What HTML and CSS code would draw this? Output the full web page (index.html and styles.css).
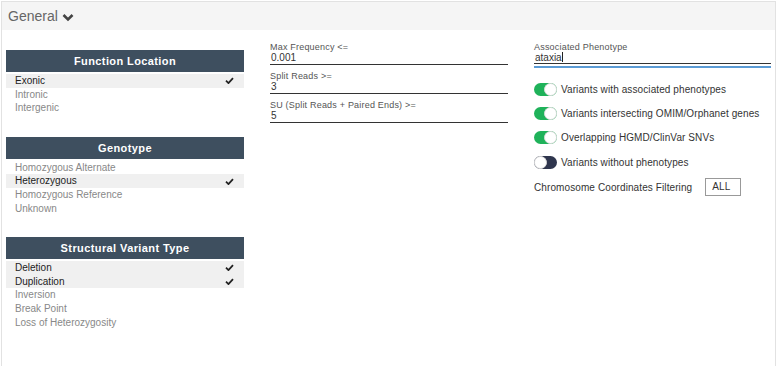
FILE: index.html
```html
<!DOCTYPE html>
<html lang="en">
<head>
    <meta charset="UTF-8">
    <title>Filters</title>
    <link rel="stylesheet" href="styles.css">
</head>
<body>
    <div class="card">
        <div class="card-header">
            General
            <svg class="chevron" width="12" height="9" viewBox="0 0 12 9"><path d="M1.5 2 L6 6.5 L10.5 2" fill="none" stroke="#444" stroke-width="2.6"/></svg>
        </div>
        <div class="card-body">
            <div class="col">
                <div class="panel">
                    <div class="panel-title">Function Location</div>
                    <div class="item selected">Exonic<svg class="check" viewBox="0 0 10 8"><path d="M1 4.2 L3.8 7 L9 1.2" fill="none" stroke="#222" stroke-width="2"/></svg></div>
                    <div class="item">Intronic</div>
                    <div class="item">Intergenic</div>
                </div>
                <div class="panel">
                    <div class="panel-title">Genotype</div>
                    <div class="item">Homozygous Alternate</div>
                    <div class="item selected">Heterozygous<svg class="check" viewBox="0 0 10 8"><path d="M1 4.2 L3.8 7 L9 1.2" fill="none" stroke="#222" stroke-width="2"/></svg></div>
                    <div class="item">Homozygous Reference</div>
                    <div class="item">Unknown</div>
                </div>
                <div class="panel">
                    <div class="panel-title">Structural Variant Type</div>
                    <div class="item selected">Deletion<svg class="check" viewBox="0 0 10 8"><path d="M1 4.2 L3.8 7 L9 1.2" fill="none" stroke="#222" stroke-width="2"/></svg></div>
                    <div class="item selected">Duplication<svg class="check" viewBox="0 0 10 8"><path d="M1 4.2 L3.8 7 L9 1.2" fill="none" stroke="#222" stroke-width="2"/></svg></div>
                    <div class="item">Inversion</div>
                    <div class="item">Break Point</div>
                    <div class="item">Loss of Heterozygosity</div>
                </div>
            </div>
            <div class="col fields">
                <div class="field">
                    <div class="field-label">Max Frequency &lt;=</div>
                    <div class="field-value">0.001</div>
                </div>
                <div class="field">
                    <div class="field-label">Split Reads &gt;=</div>
                    <div class="field-value">3</div>
                </div>
                <div class="field">
                    <div class="field-label">SU (Split Reads + Paired Ends) &gt;=</div>
                    <div class="field-value">5</div>
                </div>
            </div>
            <div class="col fields">
                <div class="field focused">
                    <div class="field-label">Associated Phenotype</div>
                    <div class="field-value">ataxia<span class="caret"></span></div>
                </div>
                <div class="toggles">
                    <div class="toggle-row"><span class="toggle on"></span>Variants with associated phenotypes</div>
                    <div class="toggle-row"><span class="toggle on"></span>Variants intersecting OMIM/Orphanet genes</div>
                    <div class="toggle-row"><span class="toggle on"></span>Overlapping HGMD/ClinVar SNVs</div>
                    <div class="toggle-row off-row"><span class="toggle"></span>Variants without phenotypes</div>
                </div>
                <div class="coords">
                    Chromosome Coordinates Filtering
                    <span class="coords-box">ALL</span>
                </div>
            </div>
        </div>
    </div>
</body>
</html>
```
FILE: styles.css
```css
body {
    margin: 0;
    background: #fff;
    font-family: "Liberation Sans", Arial, sans-serif;
}
.card {
    margin: 1px 2px 0 1px;
    border: 1px solid #e2e2e2;
    height: 380px;
}
.card-header {
    background: #f5f5f5;
    height: 28px;
    line-height: 28px;
    padding-left: 6px;
    font-size: 14px;
    color: #666;
}
.chevron {
    vertical-align: -1px;
    margin-left: 0;
}
.card-body {
    display: grid;
    grid-template-columns: 238px 238px 237px;
    column-gap: 26px;
    padding: 12px 0 0 4px;
}
.col {
    padding-top: 8px;
}
.col.fields {
    padding-top: 0;
}
.panel {
    margin-bottom: 22px;
}
.panel-title {
    background: #3e4f5f;
    color: #fff;
    font-weight: bold;
    font-size: 11px;
    letter-spacing: 0.4px;
    text-align: center;
    height: 22px;
    line-height: 22px;
    margin-bottom: 2px;
}
.item {
    display: flex;
    justify-content: space-between;
    align-items: center;
    font-size: 10px;
    line-height: 13.6px;
    padding: 0 10px 0 9px;
    color: #888;
}
.item.selected {
    background: #f0f0f0;
    color: #222;
}
.check {
    width: 9px;
    height: 7px;
}
.field {
    margin-bottom: 6px;
    border-bottom: 1px solid #333;
}
.field-label {
    font-size: 9px;
    line-height: 10px;
    color: #555;
    letter-spacing: 0.2px;
}
.field-value {
    font-size: 10px;
    line-height: 12px;
    color: #333;
    padding-left: 1px;
}
.field.focused {
    margin-bottom: 0;
}
.field.focused::after {
    content: "";
    display: block;
    height: 2px;
    background: #5b9bd5;
    margin-bottom: -3px;
    position: relative;
    top: 2px;
}
.caret {
    display: inline-block;
    width: 1px;
    height: 10px;
    background: #222;
    vertical-align: -1px;
}
.toggles {
    margin-top: 19px;
}
.toggle-row {
    display: flex;
    align-items: center;
    font-size: 10px;
    color: #333;
    height: 13px;
    margin-bottom: 11px;
    letter-spacing: 0.1px;
}
.toggle-row.off-row {
    margin-top: 12px;
    margin-bottom: 0;
}
.toggle-row:nth-child(3) {
    margin-bottom: 0;
}
.toggle {
    position: relative;
    width: 23px;
    height: 13px;
    border-radius: 7px;
    background: #2f364e;
    margin-right: 4px;
    flex: none;
}
.toggle::after {
    content: "";
    position: absolute;
    top: 0;
    left: 0;
    width: 11px;
    height: 11px;
    border-radius: 50%;
    background: #fff;
    border: 1px solid #ddd;
}
.toggle.on {
    background: #1fb25a;
}
.toggle.on::after {
    left: 10px;
}
.coords {
    display: flex;
    align-items: center;
    margin-top: 9px;
    font-size: 10px;
    color: #333;
    letter-spacing: 0.1px;
}
.coords-box {
    margin-left: 13px;
    border: 1px solid #999;
    width: 28px;
    height: 16px;
    line-height: 16px;
    padding-left: 6px;
    font-size: 10px;
}
```
